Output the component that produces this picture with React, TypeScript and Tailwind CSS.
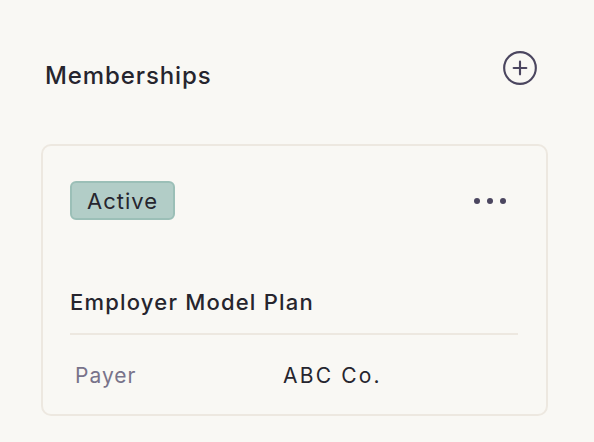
import { CirclePlus } from 'lucide-react'

export default function App() {
  return (
    <main
      className="min-h-[442px] w-full bg-[#f9f8f4] px-[41px] pt-[49px] text-[#26252e]"
      style={{ fontFamily: 'Inter, "Noto Sans", sans-serif' }}
    >
      <div className="flex h-[38px] w-[506px] items-start justify-between">
        <h2 className="mt-[12px] pl-[4px] text-[24px] font-medium leading-[30px] tracking-[0.9px]">Memberships</h2>
        <button type="button" className="mr-[8px] text-[#4b465f]" aria-label="Add membership">
          <CirclePlus size={38} strokeWidth={1.35} />
        </button>
      </div>

      <section className="mt-[57px] h-[272px] w-[507px] rounded-[10px] border-2 border-[#ede8e0] px-[27px] pt-[35px]">
        <div className="flex items-center justify-between">
          <span className="inline-flex h-[39px] items-center rounded-[6px] border-2 border-[#9bbfb7] bg-[#b2cdc7] px-[15px] text-[22px] leading-none tracking-[1px]">
            Active
          </span>
          <div className="mr-[13px] flex gap-[7px]" aria-label="More options">
            <span className="h-[6px] w-[6px] rounded-full bg-[#4b465f]" />
            <span className="h-[6px] w-[6px] rounded-full bg-[#4b465f]" />
            <span className="h-[6px] w-[6px] rounded-full bg-[#4b465f]" />
          </div>
        </div>

        <h3 className="mt-[68px] text-[22px] font-medium leading-[28px] tracking-[1.2px]">Employer Model Plan</h3>
        <div className="mt-[17px] h-[2px] w-[448px] bg-[#ede8e0]" />

        <div className="mt-[27px] flex text-[21px] leading-[28px]">
          <span className="w-[213px] pl-[5px] tracking-[1px] text-[#78738a]">Payer</span>
          <span className="tracking-[2.2px]">ABC Co.</span>
        </div>
      </section>
    </main>
  )
}
